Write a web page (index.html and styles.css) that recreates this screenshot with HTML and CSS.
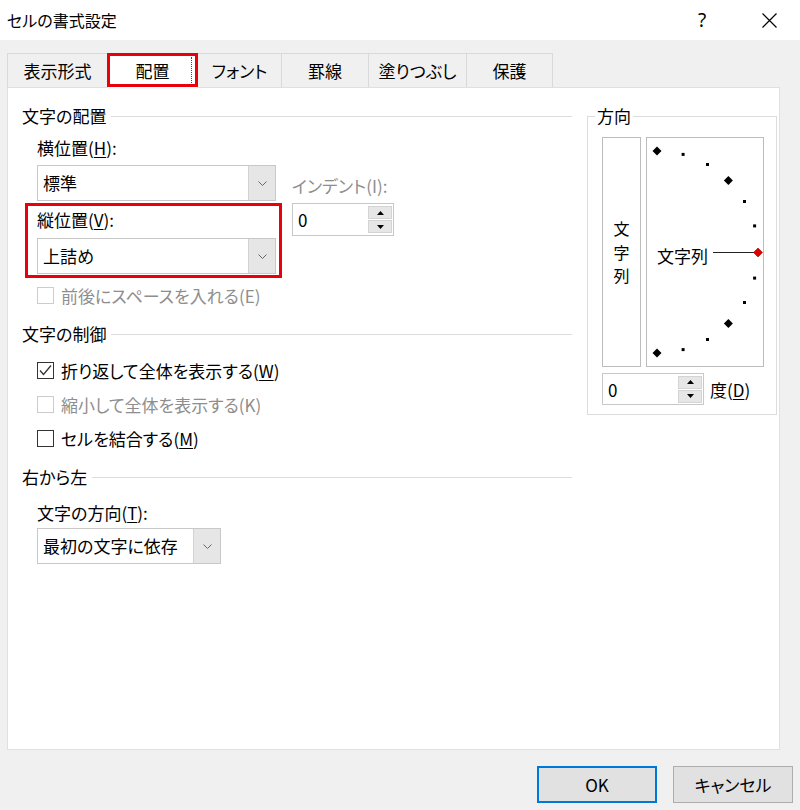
FILE: index.html
```
<!DOCTYPE html>
<html lang="ja">
<head>
<meta charset="utf-8">
<title>セルの書式設定</title>
<link rel="stylesheet" href="styles.css">
</head>
<body>
<div class="titlebar">
  <span class="title">セルの書式設定</span>
  <span class="help">?</span>
  <span class="close"><svg width="15" height="15" viewBox="0 0 15 15"><path d="M0.5 0.5L14.5 14.5M14.5 0.5L0.5 14.5" stroke="#000" stroke-width="1.2" fill="none"/></svg></span>
</div>
<div class="tabs">
  <div class="tab t1">表示形式</div>
  <div class="tab t2 active">配置</div>
  <div class="tab t3">フォント</div>
  <div class="tab t4">罫線</div>
  <div class="tab t5">塗りつぶし</div>
  <div class="tab t6">保護</div>
</div>
<div class="panel">
  <div class="left">
    <div class="group-head"><span>文字の配置</span><i></i></div>
    <div class="row-top">
      <div class="col-h">
        <div class="lbl">横位置(<u>H</u>):</div>
        <div class="select sel-wide s1"><span class="val">標準</span><span class="dd"><svg width="9" height="5" viewBox="0 0 9 5"><path d="M0.5 0.5L4.5 4.5L8.5 0.5" stroke="#666" fill="none"/></svg></span></div>
        <div class="vgroup">
          <div class="lbl">縦位置(<u>V</u>):</div>
          <div class="select sel-wide s2"><span class="val">上詰め</span><span class="dd"><svg width="9" height="5" viewBox="0 0 9 5"><path d="M0.5 0.5L4.5 4.5L8.5 0.5" stroke="#666" fill="none"/></svg></span></div>
        </div>
      </div>
      <div class="col-indent">
        <div class="lbl disabled">インデント(I):</div>
        <div class="spin spin1">
          <span class="sval">0</span>
          <span class="sbtns">
            <span class="sb"><svg width="7" height="4" viewBox="0 0 7 4"><path d="M0 4L3.5 0L7 4Z" fill="#000"/></svg></span>
            <span class="sb"><svg width="7" height="4" viewBox="0 0 7 4"><path d="M0 0L3.5 4L7 0Z" fill="#000"/></svg></span>
          </span>
        </div>
      </div>
    </div>
    <div class="cbrow single disabled"><span class="cb"></span><span>前後にスペースを入れる(E)</span></div>

    <div class="group-head g2"><span>文字の制御</span><i></i></div>
    <div class="cbgroup">
      <div class="cbrow"><span class="cb"><svg width="15" height="15" viewBox="0 0 15 15"><path d="M2 7.5L5.5 11.5L13 2.5" stroke="#333" stroke-width="1.3" fill="none"/></svg></span><span>折り返して全体を表示する(<u>W</u>)</span></div>
      <div class="cbrow disabled"><span class="cb"></span><span>縮小して全体を表示する(K)</span></div>
      <div class="cbrow"><span class="cb"></span><span>セルを結合する(<u>M</u>)</span></div>
    </div>

    <div class="group-head g3"><span>右から左</span><i></i></div>
    <div class="lbl dir-lbl">文字の方向(<u>T</u>):</div>
    <div class="select sel-dir"><span class="val">最初の文字に依存</span><span class="dd"><svg width="9" height="5" viewBox="0 0 9 5"><path d="M0.5 0.5L4.5 4.5L8.5 0.5" stroke="#666" fill="none"/></svg></span></div>
  </div>

  <fieldset class="orient">
    <legend>方向</legend>
    <div class="orient-inner">
      <div class="dialrow">
        <div class="vbtn"><span>文</span><span>字</span><span>列</span></div>
        <div class="dial">
          <svg width="116" height="228" viewBox="0 0 116 228">
            <polygon points="10,8.5 14.5,13 10,17.5 5.5,13" fill="#000"/>
            <rect x="34.6" y="14.9" width="3" height="3" fill="#000"/>
            <rect x="59" y="25" width="3" height="3" fill="#000"/>
            <polygon points="81.4,38.1 85.9,42.6 81.4,47.1 76.9,42.6" fill="#000"/>
            <rect x="96" y="62" width="3" height="3" fill="#000"/>
            <rect x="106.1" y="86.4" width="3" height="3" fill="#000"/>
            <line x1="66" y1="114.5" x2="107" y2="114.5" stroke="#222" stroke-width="1"/>
            <polygon points="111,110 115.5,114.5 111,119 106.5,114.5" fill="#e00000" stroke="#a00000" stroke-width="0.6"/>
            <rect x="106.1" y="138.6" width="3" height="3" fill="#000"/>
            <rect x="96" y="163" width="3" height="3" fill="#000"/>
            <polygon points="81.4,180.9 85.9,185.4 81.4,189.9 76.9,185.4" fill="#000"/>
            <rect x="59" y="200" width="3" height="3" fill="#000"/>
            <rect x="34.6" y="210.1" width="3" height="3" fill="#000"/>
            <polygon points="10,210.5 14.5,215 10,219.5 5.5,215" fill="#000"/>
            <text x="10" y="125" class="dialtext">文字列</text>
          </svg>
        </div>
      </div>
      <div class="spinrow">
        <div class="spin spin2">
          <span class="sval">0</span>
          <span class="sbtns">
            <span class="sb"><svg width="7" height="4" viewBox="0 0 7 4"><path d="M0 4L3.5 0L7 4Z" fill="#000"/></svg></span>
            <span class="sb"><svg width="7" height="4" viewBox="0 0 7 4"><path d="M0 0L3.5 4L7 0Z" fill="#000"/></svg></span>
          </span>
        </div>
        <span class="deg">度(<u>D</u>)</span>
      </div>
    </div>
  </fieldset>
</div>
<div class="buttons">
  <div class="btn primary">OK</div>
  <div class="btn">キャンセル</div>
</div>
</body>
</html>
```
FILE: styles.css
```
html, body {
  margin: 0;
  padding: 0;
}
body {
  width: 800px;
  height: 810px;
  overflow: hidden;
  background: #f0f0f0;
  font-family: "Noto Sans CJK JP", "Noto Sans", sans-serif;
  font-size: 17px;
  color: #000;
  font-feature-settings: "palt";
}
u {
  text-decoration: underline;
  text-underline-offset: 2px;
}

/* title bar */
.titlebar {
  height: 40px;
  background: #fff;
  display: flex;
  align-items: center;
}
.title {
  flex: 1;
  margin-left: 7px;
  font-size: 16px;
}
.help {
  width: 20px;
  text-align: center;
  font-size: 19px;
  font-family: "Noto Sans", sans-serif;
}
.close {
  margin-left: 50px;
  margin-right: 23px;
  width: 15px;
  height: 15px;
}
.close svg { display: block; }

/* tabs */
.tabs {
  display: flex;
  margin: 13px 0 0 7px;
  height: 34px;
}
.tab {
  box-sizing: border-box;
  height: 34px;
  line-height: 33px;
  text-align: center;
  border-top: 1px solid #d9d9d9;
  border-left: 1px solid #d9d9d9;
  background: #f0f0f0;
}
.t1 { width: 100px; }
.t2 { width: 90px; }
.t3 { width: 84px; }
.t4 { width: 87px; }
.t5 { width: 98px; }
.t6 { width: 87px; border-right: 1px solid #d9d9d9; }
.tab.active {
  background: #fff;
  height: 35px;
  position: relative;
  z-index: 2;
}
.tab.active::after {
  content: "";
  position: absolute;
  left: -1px;
  top: -1px;
  width: 91px;
  height: 34px;
  box-sizing: border-box;
  border: 3px solid #e8000b;
}
.tab.active::before {
  content: "";
  position: absolute;
  left: 83px;
  top: 3px;
  height: 28px;
  border-left: 1px dotted #444;
}

/* panel */
.panel {
  box-sizing: border-box;
  margin-left: 7px;
  width: 773px;
  height: 663px;
  background: #fff;
  border: 1px solid #e0e0e0;
  display: flex;
  align-items: flex-start;
  padding: 16px 0 0 14px;
  position: relative;
  z-index: 1;
}
.left {
  width: 550px;
}
.group-head {
  display: flex;
  align-items: center;
  height: 24px;
  line-height: 24px;
}
.group-head i {
  flex: 1;
  height: 1px;
  background: #dcdcdc;
  margin-left: 5px;
}
.g2 { margin-top: 15px; }
.g3 { margin-top: 10px; }

.lbl {
  height: 24px;
  line-height: 24px;
  white-space: nowrap;
}
.disabled { color: #8e8e8e; }

.row-top {
  display: flex;
  margin-top: 8px;
  padding-left: 15px;
}
.col-h { width: 239px; }
.col-indent { margin-left: 16px; }
.col-indent .lbl { margin-top: 38px; }

.select {
  box-sizing: border-box;
  display: flex;
  height: 36px;
  border: 1px solid #c8c8c8;
  background: #fff;
}
.select .val {
  flex: 1;
  padding-left: 5px;
  line-height: 34px;
  white-space: nowrap;
}
.select .dd {
  width: 26px;
  background: #e6e6e6;
  border-left: 1px solid #d2d2d2;
  display: flex;
  align-items: center;
  justify-content: center;
}
.select .dd svg { display: block; }
.s1 { margin-top: 5px; }
.s2 { margin-top: 6px; }

.vgroup {
  position: relative;
  margin-top: 7px;
}
.vgroup::after {
  content: "";
  position: absolute;
  left: -12px;
  top: -5px;
  right: -6px;
  bottom: -4px;
  border: 3px solid #e8000b;
}

.spin {
  box-sizing: border-box;
  display: flex;
  align-items: center;
  border: 1px solid #c8c8c8;
  background: #fff;
}
.spin1 {
  width: 102px;
  height: 33px;
  margin-top: 5px;
}
.sval {
  flex: 1;
  padding-left: 5px;
}
.sbtns {
  display: flex;
  flex-direction: column;
  gap: 1px;
  margin-right: 1px;
}
.sb {
  box-sizing: border-box;
  width: 24px;
  height: 13px;
  background: #e6e6e6;
  border: 1px solid #d4d4d4;
  display: flex;
  align-items: center;
  justify-content: center;
}
.sb svg { display: block; }

.cbrow {
  display: flex;
  align-items: center;
  padding-left: 15px;
  height: 34px;
  white-space: nowrap;
}
.cbrow.single {
  height: 24px;
  margin-top: 9px;
}
.cbgroup { margin-top: 7px; }
.cb {
  box-sizing: border-box;
  width: 17px;
  height: 17px;
  border: 1px solid #333;
  background: #fff;
  margin-right: 7px;
  flex: none;
  display: flex;
  align-items: center;
  justify-content: center;
}
.cb svg { display: block; }
.cbrow.disabled .cb { border-color: #cccccc; }

.dir-lbl {
  margin-top: 12px;
  padding-left: 15px;
}
.sel-dir {
  margin-top: 3px;
  margin-left: 15px;
  width: 184px;
}

/* orientation */
.orient {
  box-sizing: border-box;
  width: 190px;
  margin: 0 0 0 15px;
  padding: 9px 12px 9px 7px;
  border: 1px solid #dcdcdc;
  min-width: 0;
}
.orient legend {
  padding: 0 2px;
  line-height: 24px;
  height: 24px;
}
.orient-inner {
  padding-left: 7px;
}
.dialrow {
  display: flex;
  gap: 5px;
}
.vbtn {
  box-sizing: border-box;
  width: 39px;
  height: 230px;
  border: 1px solid #bcbcbc;
  background: #fff;
  display: flex;
  flex-direction: column;
  align-items: center;
  justify-content: center;
  font-size: 16px;
  line-height: 23.5px;
  padding-top: 1px;
}
.dial {
  box-sizing: border-box;
  width: 118px;
  height: 230px;
  border: 1px solid #bcbcbc;
  background: #fff;
}
.dial svg { display: block; }
.dialtext {
  font-family: "Noto Sans CJK JP", sans-serif;
  font-size: 17px;
  fill: #000;
}
.spinrow {
  display: flex;
  align-items: center;
  margin-top: 6px;
}
.spin2 {
  width: 102px;
  height: 32px;
}
.deg {
  margin-left: 6px;
}

/* buttons */
.buttons {
  display: flex;
  justify-content: flex-end;
  gap: 16px;
  margin: 16px 7px 0 0;
}
.btn {
  box-sizing: border-box;
  width: 120px;
  height: 37px;
  border: 1px solid #adadad;
  background: #e1e1e1;
  display: flex;
  align-items: center;
  justify-content: center;
}
.btn.primary {
  border: 2px solid #0078d7;
}
```
